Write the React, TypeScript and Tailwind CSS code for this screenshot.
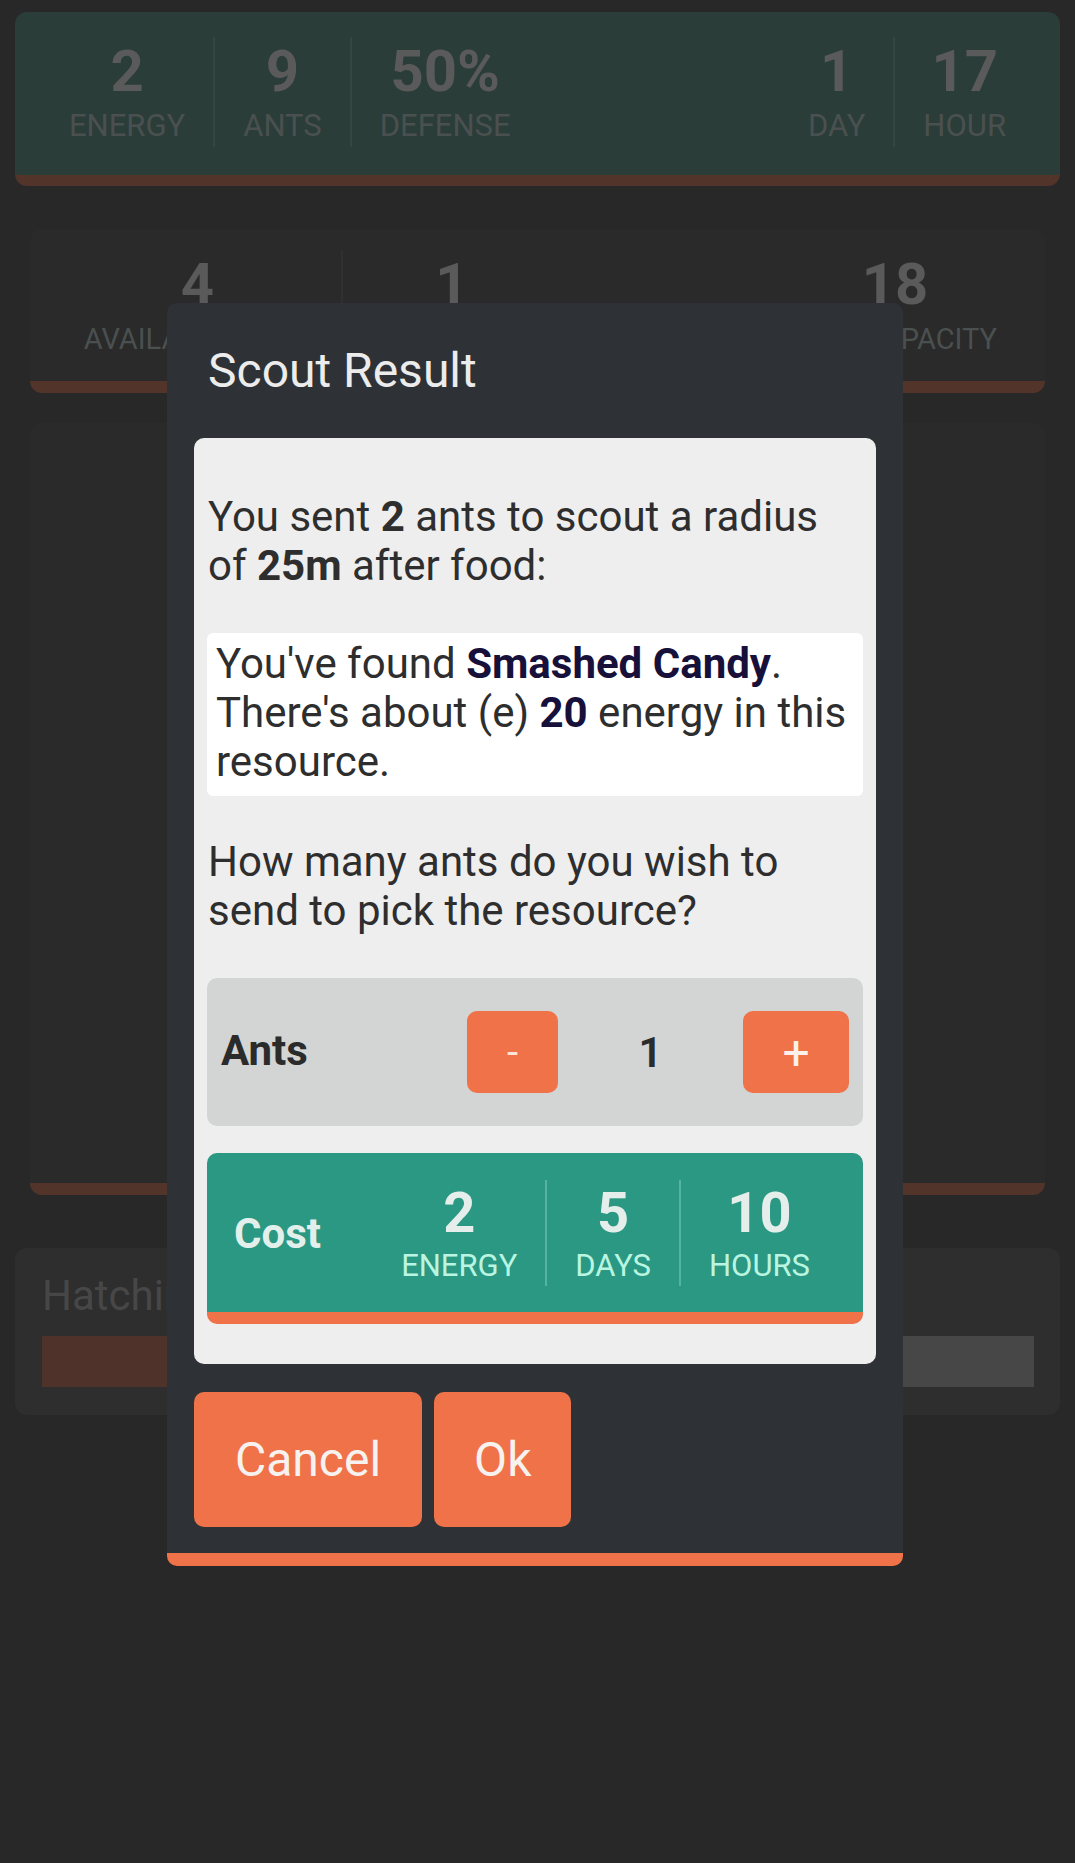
const Stat = ({
  value,
  label,
  width,
  labelSize = "text-[31px]",
}: {
  value: string;
  label: string;
  width?: string;
  labelSize?: string;
}) => (
  <div className={`flex flex-col items-center px-[28px] ${width ?? ""}`}>
    <span className="text-[58px] font-bold leading-[68px] text-[#5a5a5a]">{value}</span>
    <span className={`whitespace-nowrap leading-[42px] text-[#4a504f] ${labelSize}`}>{label}</span>
  </div>
);

const CostStat = ({ value, label }: { value: string; label: string }) => (
  <div className="flex flex-col items-center px-[28px]">
    <span className="text-[56px] font-bold leading-[66px] text-[#e6eeeb]">{value}</span>
    <span className="text-[31px] leading-[40px] text-[#baf5e1]">{label}</span>
  </div>
);

const App = () => {
  return (
    <div className="relative h-[1863px] w-full overflow-hidden bg-[#282828] px-[15px] pt-[12px] [font-family:Roboto,sans-serif]">
      {/* Top status bar */}
      <div className="flex justify-between rounded-[12px] border-b-[11px] border-[#52342b] bg-[#2b3d39] px-[26px] pt-[25px] pb-[28px]">
        <div className="flex divide-x-2 divide-[#33463f]">
          <Stat value="2" label="ENERGY" />
          <Stat value="9" label="ANTS" />
          <Stat value="50%" label="DEFENSE" />
        </div>
        <div className="flex divide-x-2 divide-[#33463f]">
          <Stat value="1" label="DAY" />
          <Stat value="17" label="HOUR" />
        </div>
      </div>

      {/* Colony card */}
      <div className="mx-[15px] mt-[43px] flex justify-between rounded-[12px] border-b-[12px] border-[#52342b] bg-[#2a2a2a] px-[24px] pt-[21px] pb-[21px]">
        <div className="flex divide-x-2 divide-[#303030]">
          <Stat value="4" label="AVAILABLE ANTS" width="w-[289px]" labelSize="text-[29px]" />
          <Stat value="1" label="SCOUTING" width="w-[218px]" labelSize="text-[29px]" />
        </div>
        <Stat value="18" label="MAX CAPACITY" width="w-[252px]" labelSize="text-[29px]" />
      </div>

      {/* Main card */}
      <div className="mx-[15px] mt-[30px] h-[772px] rounded-[12px] border-b-[12px] border-[#52342b] bg-[#2a2a2a]" />

      {/* Hatching */}
      <div className="mt-[53px] h-[167px] rounded-[12px] bg-[#2e2e2e] pl-[27px] pr-[26px] pt-[23px]">
        <p className="text-[42px] leading-[50px] text-[#474747]">Hatching eggs</p>
        <div className="mt-[15px] flex h-[51px] bg-[#474747]">
          <div className="h-full w-[45%] bg-[#4f3229]" />
        </div>
      </div>

      {/* Scout result dialog */}
      <div className="absolute left-[167px] top-[303px] w-[736px] overflow-hidden rounded-[10px] border-b-[13px] border-[#ef7248] bg-[#2e3236] px-[27px] pb-[26px]">
        <h2 className="mb-[39px] pl-[14px] pt-[40px] text-[48px] leading-[56px] text-[#ececec]">Scout Result</h2>

        <div className="rounded-[10px] bg-[#eeeeee] px-[13px] pt-[54px] pb-[40px] text-[42px] leading-[49px] text-[#2e2e2e]">
          <p className="pl-[1px]">
            You sent <b>2</b> ants to scout a radius of <b>25m</b> after food:
          </p>

          <div className="mt-[43px] rounded-[6px] bg-white pl-[9px] pr-[8px] pt-[6px] pb-[10px]">
            You've found <b className="text-[#16103a]">Smashed Candy</b>. There's about (e){" "}
            <b className="text-[#16103a]">20</b> energy in this resource.
          </div>

          <p className="mt-[41px] pl-[1px]">How many ants do you wish to send to pick the resource?</p>

          <div className="mt-[43px] flex h-[148px] items-center justify-between rounded-[10px] bg-[#d3d4d4] px-[14px]">
            <span className="-mt-[3px] font-bold text-[#2b2b2b]">Ants</span>
            <div className="flex items-center">
              <button className="flex h-[82px] w-[91px] items-center justify-center rounded-[10px] bg-[#ef7248] text-[40px] text-[#fbe3da]">
                -
              </button>
              <span className="w-[185px] text-center font-semibold text-[#2b2b2b]">1</span>
              <button className="flex h-[82px] w-[106px] items-center justify-center rounded-[10px] bg-[#ef7248] text-[48px] text-[#fdf0ea]">
                +
              </button>
            </div>
          </div>

          <div className="mt-[27px] flex items-center rounded-[10px] border-b-[12px] border-[#ef7248] bg-[#2a9882] pl-[27px] pr-[25px] pt-[27px] pb-[26px]">
            <span className="flex-1 font-bold text-[#e3efeb]">Cost</span>
            <div className="flex divide-x-2 divide-[#55b3a0]">
              <CostStat value="2" label="ENERGY" />
              <CostStat value="5" label="DAYS" />
              <CostStat value="10" label="HOURS" />
            </div>
          </div>
        </div>

        <div className="mt-[28px] flex gap-[12px]">
          <button className="h-[135px] rounded-[10px] bg-[#ef7248] px-[41px] text-[48px] text-[#f7f2ef]">Cancel</button>
          <button className="h-[135px] rounded-[10px] bg-[#ef7248] px-[40px] text-[48px] text-[#f7f2ef]">Ok</button>
        </div>
      </div>
    </div>
  );
};

export default App;
